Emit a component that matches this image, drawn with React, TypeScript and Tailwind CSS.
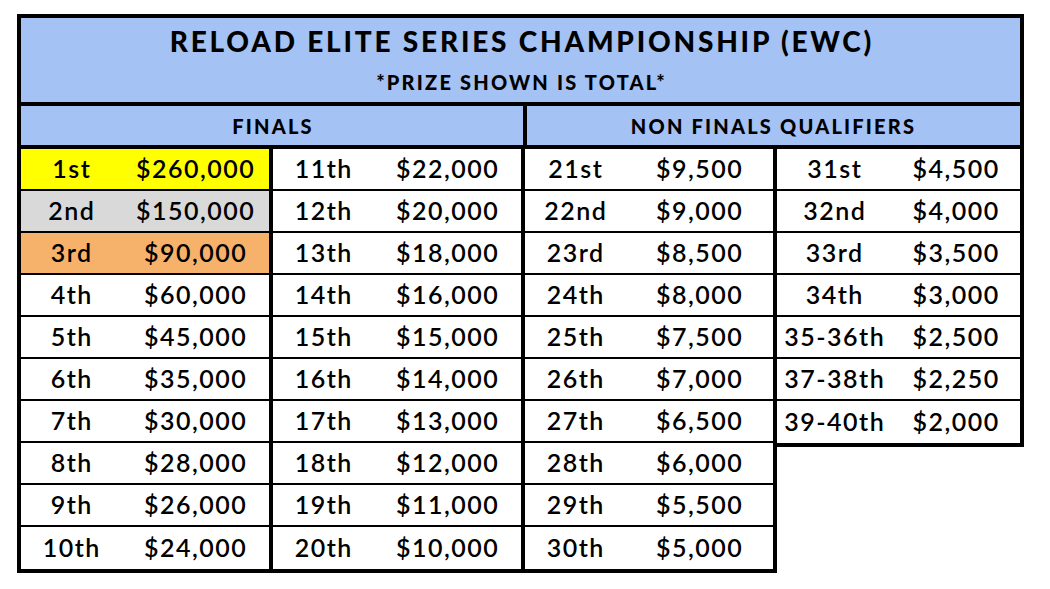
import React from 'react';

type Row = { place: string; prize: string; bg?: string };

const finalsA: Row[] = [
  { place: '1st', prize: '$260,000', bg: 'bg-[#ffff00]' },
  { place: '2nd', prize: '$150,000', bg: 'bg-[#d9d9d9]' },
  { place: '3rd', prize: '$90,000', bg: 'bg-[#f6b26b]' },
  { place: '4th', prize: '$60,000' },
  { place: '5th', prize: '$45,000' },
  { place: '6th', prize: '$35,000' },
  { place: '7th', prize: '$30,000' },
  { place: '8th', prize: '$28,000' },
  { place: '9th', prize: '$26,000' },
  { place: '10th', prize: '$24,000' },
];

const finalsB: Row[] = [
  { place: '11th', prize: '$22,000' },
  { place: '12th', prize: '$20,000' },
  { place: '13th', prize: '$18,000' },
  { place: '14th', prize: '$16,000' },
  { place: '15th', prize: '$15,000' },
  { place: '16th', prize: '$14,000' },
  { place: '17th', prize: '$13,000' },
  { place: '18th', prize: '$12,000' },
  { place: '19th', prize: '$11,000' },
  { place: '20th', prize: '$10,000' },
];

const qualA: Row[] = [
  { place: '21st', prize: '$9,500' },
  { place: '22nd', prize: '$9,000' },
  { place: '23rd', prize: '$8,500' },
  { place: '24th', prize: '$8,000' },
  { place: '25th', prize: '$7,500' },
  { place: '26th', prize: '$7,000' },
  { place: '27th', prize: '$6,500' },
  { place: '28th', prize: '$6,000' },
  { place: '29th', prize: '$5,500' },
  { place: '30th', prize: '$5,000' },
];

const qualB: Row[] = [
  { place: '31st', prize: '$4,500' },
  { place: '32nd', prize: '$4,000' },
  { place: '33rd', prize: '$3,500' },
  { place: '34th', prize: '$3,000' },
  { place: '35-36th', prize: '$2,500' },
  { place: '37-38th', prize: '$2,250' },
  { place: '39-40th', prize: '$2,000' },
];

const Group: React.FC<{ rows: Row[]; width: string; placeW: string }> = ({ rows, width, placeW }) => (
  <div className={`${width} flex flex-col`}>
    {rows.map((r, i) => (
      <div
        key={r.place}
        className={`flex h-[42px] items-center ${r.bg ?? 'bg-white'} ${i < rows.length - 1 ? 'border-b-2 border-black' : ''}`}
      >
        <div className={`${placeW} pl-[1.5px] text-center`}>{r.place}</div>
        <div className="flex-1 pl-[1.5px] text-center">{r.prize}</div>
      </div>
    ))}
  </div>
);

const App: React.FC = () => {
  return (
    <div className="min-h-screen bg-white pt-[14px] pl-[17px] text-black" style={{ fontFamily: 'Lato, "Liberation Sans", sans-serif' }}>
      <div className="w-[1007px]">
        <header className="flex h-[88px] flex-col items-center border-4 border-b-0 border-black bg-[#a4c2f4] pt-[5px]">
          <h1 className="pl-[2.8px] text-[28px] font-black leading-[36px] tracking-[2.8px]">RELOAD ELITE SERIES CHAMPIONSHIP (EWC)</h1>
          <p className="mt-[11px] pl-[2.2px] text-[20px] font-black leading-[24px] tracking-[2.2px]">*PRIZE SHOWN IS TOTAL*</p>
        </header>

        <div className="flex h-[47px] border-4 border-black bg-[#a4c2f4] pl-[2px] text-[20px] font-black tracking-[2.2px]">
          <div className="flex w-[500px] items-center justify-center">FINALS</div>
          <div className="flex flex-1 items-center justify-center border-l-4 border-black">NON FINALS QUALIFIERS</div>
        </div>

        <div className="flex items-start text-[25px] font-semibold tracking-[1.5px]">
          <div className="flex border-4 border-t-0 border-black">
            <Group rows={finalsA} width="w-[248px]" placeW="w-[100px]" />
            <div className="w-[4px] self-stretch bg-black" />
            <Group rows={finalsB} width="w-[248px]" placeW="w-[100px]" />
            <div className="w-[4px] self-stretch bg-black" />
            <Group rows={qualA} width="w-[248px]" placeW="w-[100px]" />
          </div>
          <div className="-ml-[4px] flex border-4 border-t-0 border-black">
            <Group rows={qualB} width="w-[243px]" placeW="w-[114px]" />
          </div>
        </div>
      </div>
    </div>
  );
};

export default App;
